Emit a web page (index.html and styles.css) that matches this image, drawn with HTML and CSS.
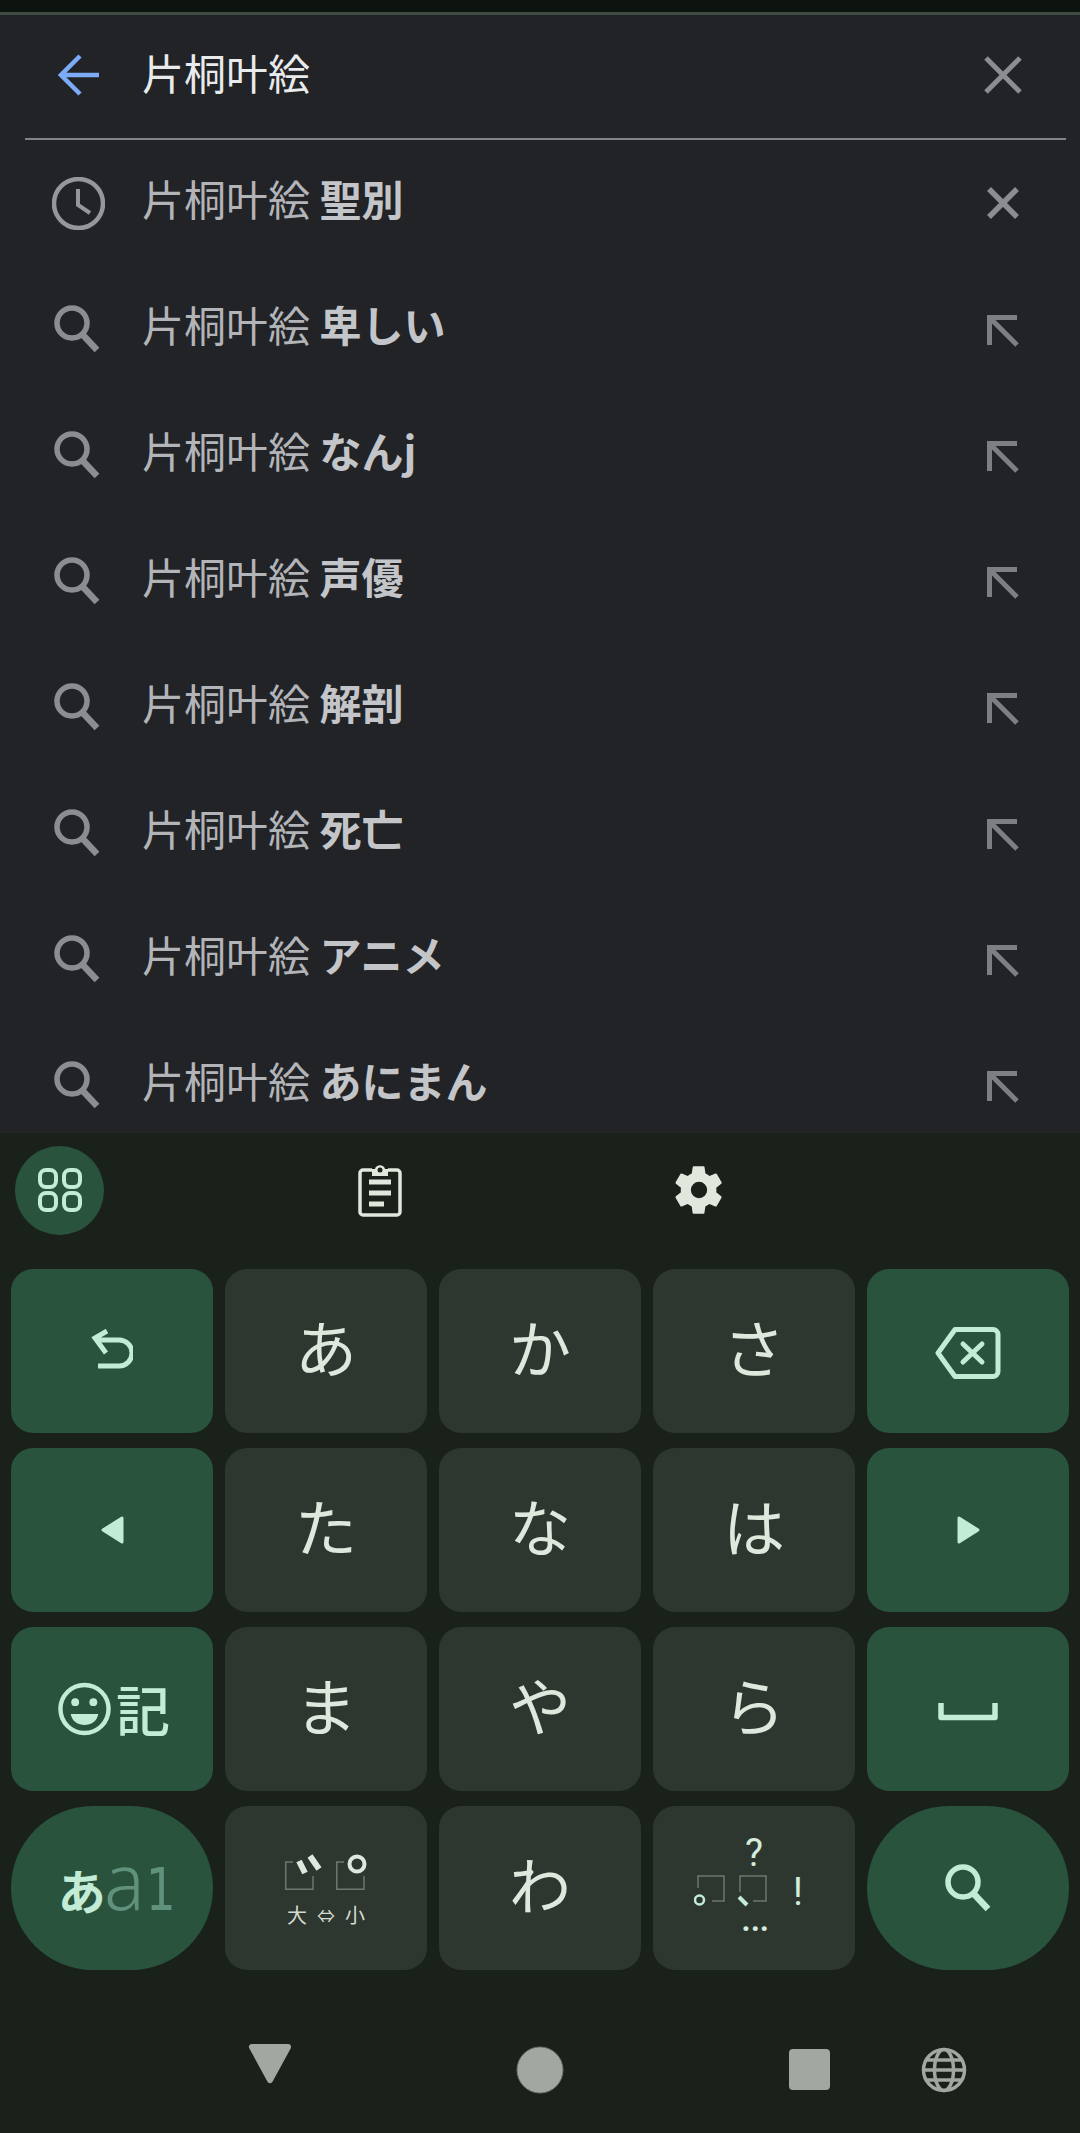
FILE: index.html
```html
<!DOCTYPE html>
<html lang="ja">
	<head>
		<meta charset="utf-8" />
		<meta name="viewport" content="width=device-width, initial-scale=1.0" />
		<title>片桐叶絵</title>
		<link rel="stylesheet" href="styles.css">
	</head>
	<body>
		<svg class="defs" width="0" height="0">
			<symbol id="i-search" viewBox="0 0 46 48">
				<circle cx="18" cy="18" r="15" fill="none" stroke="currentColor" stroke-width="5.500" />
				<path d="M28 29L43 45" fill="none" stroke="currentColor" stroke-width="6.500" />
			</symbol>
			<symbol id="i-fill" viewBox="0 0 34 34">
				<path d="M3.500 31V3.500H31M4 4L31 31" fill="none" stroke="currentColor" stroke-width="5" />
			</symbol>
		</svg>

		<div class="status"></div>

		<!-- search -->
		<div class="search">
			<div class="head">
				<div class="lead">
					<svg class="back" viewBox="0 0 42 42"><path d="M41 21H4M22 2L3 21L22 40" fill="none" stroke="#7cacf8" stroke-width="4.500" /></svg>
				</div>
				<div class="query">片桐叶絵</div>
				<div class="tail">
					<svg class="close" viewBox="0 0 38 38"><path d="M2 2L36 36M36 2L2 36" fill="none" stroke="#8a8d92" stroke-width="5" /></svg>
				</div>
			</div>
			<div class="row">
				<div class="lead">
					<svg class="clock" viewBox="0 0 53 53"><circle cx="26.500" cy="26.500" r="24.500" fill="none" stroke="#94979b" stroke-width="4.500" /><path d="M26 12V28L38 36" fill="none" stroke="#94979b" stroke-width="4" /></svg>
				</div>
				<div class="text">片桐叶絵 <b>聖別</b></div>
				<div class="tail">
					<svg class="remove" viewBox="0 0 32 32"><path d="M2 2L30 30M30 2L2 30" fill="none" stroke="#8a8d92" stroke-width="5.500" /></svg>
				</div>
			</div>
			<div class="row">
				<div class="lead"><svg class="mag"><use href="#i-search" /></svg></div>
				<div class="text">片桐叶絵 <b>卑しい</b></div>
				<div class="tail"><svg class="fill"><use href="#i-fill" /></svg></div>
			</div>
			<div class="row">
				<div class="lead"><svg class="mag"><use href="#i-search" /></svg></div>
				<div class="text">片桐叶絵 <b>なんj</b></div>
				<div class="tail"><svg class="fill"><use href="#i-fill" /></svg></div>
			</div>
			<div class="row">
				<div class="lead"><svg class="mag"><use href="#i-search" /></svg></div>
				<div class="text">片桐叶絵 <b>声優</b></div>
				<div class="tail"><svg class="fill"><use href="#i-fill" /></svg></div>
			</div>
			<div class="row">
				<div class="lead"><svg class="mag"><use href="#i-search" /></svg></div>
				<div class="text">片桐叶絵 <b>解剖</b></div>
				<div class="tail"><svg class="fill"><use href="#i-fill" /></svg></div>
			</div>
			<div class="row">
				<div class="lead"><svg class="mag"><use href="#i-search" /></svg></div>
				<div class="text">片桐叶絵 <b>死亡</b></div>
				<div class="tail"><svg class="fill"><use href="#i-fill" /></svg></div>
			</div>
			<div class="row">
				<div class="lead"><svg class="mag"><use href="#i-search" /></svg></div>
				<div class="text">片桐叶絵 <b>アニメ</b></div>
				<div class="tail"><svg class="fill"><use href="#i-fill" /></svg></div>
			</div>
			<div class="row">
				<div class="lead"><svg class="mag"><use href="#i-search" /></svg></div>
				<div class="text">片桐叶絵 <b>あにまん</b></div>
				<div class="tail"><svg class="fill"><use href="#i-fill" /></svg></div>
			</div>
		</div>

		<!-- keyboard -->
		<div class="keyboard">
			<div class="tools">
				<div class="tool-apps">
					<svg width="44" height="44" viewBox="0 0 44 44" fill="none" stroke="#c2ecd6" stroke-width="4"><rect x="2" y="2" width="16" height="17" rx="6" /><rect x="26" y="2" width="16" height="17" rx="6" /><rect x="2" y="25" width="16" height="17" rx="6" /><rect x="26" y="25" width="16" height="17" rx="6" /></svg>
				</div>
				<svg class="tool-clip" width="44" height="54" viewBox="0 0 44 54"><path d="M14 7H5C3.500 7 2 8.500 2 10V49C2 50.500 3.500 52 5 52H39C40.500 52 42 50.500 42 49V10C42 8.500 40.500 7 39 7H30" fill="none" stroke="#e0e7dd" stroke-width="3.500" /><path d="M11 19H33M11 30H33M11 41H26" stroke="#e0e7dd" stroke-width="5" /><path d="M14 6H17C18 1 26 1 27 6H30V13H14Z" fill="#e0e7dd" /><circle cx="22" cy="7" r="2.500" fill="#19211a" /></svg>
				<svg class="tool-gear" width="56" height="56" viewBox="0 0 24 24"><path fill="#e0e7dd" fill-rule="evenodd" d="M19.400 13c.04-.32.06-.66.06-1s-.02-.68-.07-1l2.160-1.650c.2-.15.250-.42.130-.64l-2.050-3.550c-.12-.22-.38-.3-.6-.22l-2.550 1.030c-.53-.41-1.100-.75-1.720-1l-.38-2.710c-.04-.24-.25-.42-.5-.42h-4.100c-.25 0-.45.180-.49.420l-.38 2.710c-.62.250-1.200.6-1.720 1L4.630 4.940c-.23-.09-.48 0-.6.22L1.980 8.710c-.12.220-.07.490.130.640L4.270 11c-.05.32-.09.660-.09 1s.02.680.07 1l-2.160 1.650c-.2.150-.25.420-.13.640l2.050 3.550c.12.220.38.300.6.220l2.550-1.030c.53.410 1.100.750 1.720 1l.38 2.710c.04.240.24.420.49.420h4.100c.25 0 .46-.18.490-.42l.38-2.710c.62-.25 1.200-.6 1.720-1l2.550 1.030c.23.090.48 0 .6-.22l2.050-3.550c.12-.22.07-.49-.13-.64L19.400 13zM12 15.500a3.500 3.500 0 1 1 0-7 3.500 3.500 0 0 1 0 7z" /></svg>
			</div>
			<div class="keys">
				<div class="key accent">
					<svg class="undo" width="42" height="40" viewBox="0 0 42 40" fill="none" stroke="#c2ecd6" stroke-width="5"><path d="M16 2L4 9L15 24M5 11H28A13 13 0 0 1 28 37H7" /></svg>
				</div>
				<div class="key glyph">あ</div>
				<div class="key glyph">か</div>
				<div class="key glyph">さ</div>
				<div class="key accent">
					<svg class="delete" width="66" height="52" viewBox="0 0 66 52" fill="none" stroke="#c2ecd6" stroke-width="5" stroke-linecap="round" stroke-linejoin="round"><path d="M20 2.500H58A5 5 0 0 1 63 7.500V44.500A5 5 0 0 1 58 49.500H20L3 26Z" /><path d="M28 17L47 35M47 17L28 35" /></svg>
				</div>

				<div class="key accent">
					<svg width="25" height="30" viewBox="0 0 25 30"><path d="M22 3V27L3 15Z" fill="#c2ecd6" stroke="#c2ecd6" stroke-width="3" stroke-linejoin="round" /></svg>
				</div>
				<div class="key glyph">た</div>
				<div class="key glyph">な</div>
				<div class="key glyph">は</div>
				<div class="key accent">
					<svg width="25" height="30" viewBox="0 0 25 30"><path d="M3 3V27L22 15Z" fill="#c2ecd6" stroke="#c2ecd6" stroke-width="3" stroke-linejoin="round" /></svg>
				</div>

				<div class="key accent emoji-key">
					<svg width="53" height="54" viewBox="0 0 54 54"><circle cx="27" cy="27" r="24.500" fill="none" stroke="#c2ecd6" stroke-width="4.500" /><circle cx="17.500" cy="20" r="4" fill="#c2ecd6" /><circle cx="36" cy="20" r="4" fill="#c2ecd6" /><path d="M13 32H41C39 47 15 47 13 32Z" fill="#c2ecd6" /></svg>
					<span class="ki">記</span>
				</div>
				<div class="key glyph">ま</div>
				<div class="key glyph">や</div>
				<div class="key glyph">ら</div>
				<div class="key accent">
					<svg width="60" height="23" viewBox="0 0 60 23" fill="none" stroke="#c2ecd6" stroke-width="5.500" stroke-linejoin="round"><path d="M3 5V19.500H57V5" /></svg>
				</div>

				<div class="key accent pill mode">
					<span class="kana">あ</span><span class="latin-a">a</span><span class="latin-1">1</span>
				</div>
				<div class="key voiced">
					<svg width="82" height="50" viewBox="0 0 82 50" fill="none">
						<path d="M8 14H0.750V41.250H28V28M59 14H51.750V41.250H79V28" stroke="#6f766e" stroke-width="1.500" />
						<path d="M14 13L20 25M25 8L34 21" stroke="#e0e7dd" stroke-width="6" />
						<circle cx="72" cy="16" r="7.500" stroke="#e0e7dd" stroke-width="4" />
					</svg>
					<div class="size">大<span>⇔</span>小</div>
				</div>
				<div class="key glyph">わ</div>
				<div class="key">
					<svg width="120" height="148" viewBox="0 -22 120 148" fill="none">
						<text class="mark" x="60" y="30" text-anchor="middle">?</text>
						<text class="mark" x="104" y="69" text-anchor="middle">!</text>
						<path d="M4 52V40H30V65H18" stroke="#6f766e" stroke-width="1.500" />
						<path d="M46 56V40H72V65H59" stroke="#6f766e" stroke-width="1.500" />
						<circle cx="5.500" cy="64" r="4.500" stroke="#c2ecd6" stroke-width="2.500" />
						<path d="M45 61L53 69" stroke="#c2ecd6" stroke-width="4" />
						<text class="dots" x="61" y="95" text-anchor="middle">…</text>
					</svg>
				</div>
				<div class="key accent pill">
					<svg class="enter"><use href="#i-search" /></svg>
				</div>
			</div>
			<div class="nav">
				<svg class="nav-back" width="46" height="41" viewBox="0 0 46 41"><path d="M5 4H41L23 37Z" fill="#a2a7a2" stroke="#a2a7a2" stroke-width="6" stroke-linejoin="round" /></svg>
				<svg class="nav-home" width="48" height="48" viewBox="0 0 48 48"><circle cx="24" cy="24" r="23" fill="#a2a7a2" stroke="#6e746e" stroke-width="1" /></svg>
				<div class="nav-recent"></div>
				<svg class="nav-globe" width="46" height="46" viewBox="0 0 46 46" fill="none" stroke="#a2a7a2" stroke-width="3.500"><circle cx="23" cy="23" r="20.500" /><ellipse cx="23" cy="23" rx="9.500" ry="20.500" /><path d="M3 23H43M6 13H40M6 33H40" /></svg>
			</div>
		</div>
	</body>
</html>
```

FILE: styles.css
```css
html,
body
{
	margin: 0;
	width: 1080px;
	height: 2133px;
	overflow: hidden;
	background: #19211a;
	font-family: "Noto Sans CJK JP", "Noto Sans", sans-serif;
}
.defs
{
	display: none;
}
.status
{
	height: 12px;
	background: #0d130e;
	border-bottom: 3px solid #414c40;
}
/* search */
.search
{
	height: 1118px;
	overflow: hidden;
	background: #212327;
}
.head,
.row
{
	display: flex;
	align-items: center;
}
.head
{
	box-sizing: border-box;
	height: 125px;
	padding-bottom: 4px;
	margin-left: 25px;
	margin-right: 14px;
	border-bottom: 2px solid #818386;
}
.row
{
	height: 126px;
}
.lead
{
	width: 53px;
	margin-left: 52px;
	margin-right: 37px;
	display: flex;
	justify-content: center;
}
.head .lead
{
	margin-left: 27px;
}
.tail
{
	width: 60px;
	margin-right: 47px;
	display: flex;
	justify-content: center;
}
.head .tail
{
	margin-right: 33px;
}
.query,
.text
{
	flex: 1;
	font-size: 42px;
	line-height: 60px;
}
.query
{
	color: #e9eaec;
	padding-bottom: 6px;
}
.text
{
	color: #b2b4b8;
	padding-bottom: 10px;
}
.text b
{
	color: #c3c5c9;
	font-weight: 700;
}
.back
{
	width: 42px;
	height: 42px;
}
.close
{
	width: 38px;
	height: 38px;
}
.clock
{
	width: 53px;
	height: 53px;
}
.remove
{
	width: 32px;
	height: 32px;
}
.mag
{
	width: 46px;
	height: 48px;
	margin-left: -3px;
	color: #8a8d91;
}
.fill
{
	width: 34px;
	height: 34px;
	margin-top: 3px;
	color: #7c7f84;
}
/* keyboard */
.tools
{
	box-sizing: border-box;
	height: 136px;
	padding-left: 15px;
	padding-bottom: 22px;
	display: flex;
	align-items: center;
}
.tool-apps
{
	width: 89px;
	height: 89px;
	border-radius: 50%;
	background: #2a533e;
	display: flex;
	align-items: center;
	justify-content: center;
}
.tool-clip
{
	margin-left: 254px;
}
.tool-gear
{
	margin-left: 269px;
}
.keys
{
	display: grid;
	grid-template-columns: repeat(5, 202px);
	grid-auto-rows: 164px;
	column-gap: 12px;
	row-gap: 15px;
	padding-left: 11px;
}
.key
{
	box-sizing: border-box;
	border-radius: 22px;
	background: #2e372f;
	color: #e0e7dd;
	font-size: 62px;
	display: flex;
	align-items: center;
	justify-content: center;
}
.glyph
{
	padding-bottom: 10px;
}
.accent
{
	background: #2a533e;
	color: #c2ecd6;
}
.pill
{
	border-radius: 82px;
}
.undo
{
	margin-bottom: 4px;
}
.delete
{
	margin-top: 4px;
}
.emoji-key
{
	gap: 5px;
	padding-left: 4px;
}
.ki
{
	font-size: 54px;
	font-weight: 500;
	line-height: 60px;
}
.mode
{
	align-items: baseline;
	padding-top: 33px;
	padding-left: 9px;
	line-height: 80px;
}
.kana
{
	font-size: 48px;
	font-weight: 700;
}
.latin-a
{
	font-size: 80px;
	font-weight: 300;
	color: #5f917c;
	font-family: "Noto Sans", sans-serif;
	transform: scaleX(0.95);
	margin-left: -3px;
}
.latin-1
{
	font-size: 59px;
	color: #5f917c;
	font-family: "DejaVu Sans", sans-serif;
	transform: scaleX(0.8);
	margin: 0 -4px;
}
.voiced
{
	flex-direction: column;
	gap: 4px;
}
.size
{
	font-size: 20px;
	line-height: 26px;
	color: #d4dbd1;
	display: flex;
	gap: 10px;
}
.size span
{
	font-size: 18px;
}
.mark
{
	font-family: "Roboto", sans-serif;
	font-size: 38px;
	fill: #d4ecdd;
}
.dots
{
	font-family: "Roboto", sans-serif;
	font-size: 44px;
	fill: #d4ecdd;
}
.enter
{
	width: 46px;
	height: 48px;
	color: #c2ecd6;
}
.nav
{
	box-sizing: border-box;
	height: 163px;
	padding-left: 247px;
	padding-top: 36px;
	display: flex;
	align-items: center;
}
.nav-back
{
	margin-top: -12px;
}
.nav-home
{
	margin-left: 223px;
}
.nav-recent
{
	width: 41px;
	height: 41px;
	margin-left: 225px;
	border-radius: 4px;
	background: #a2a7a2;
}
.nav-globe
{
	margin-left: 91px;
}
```
